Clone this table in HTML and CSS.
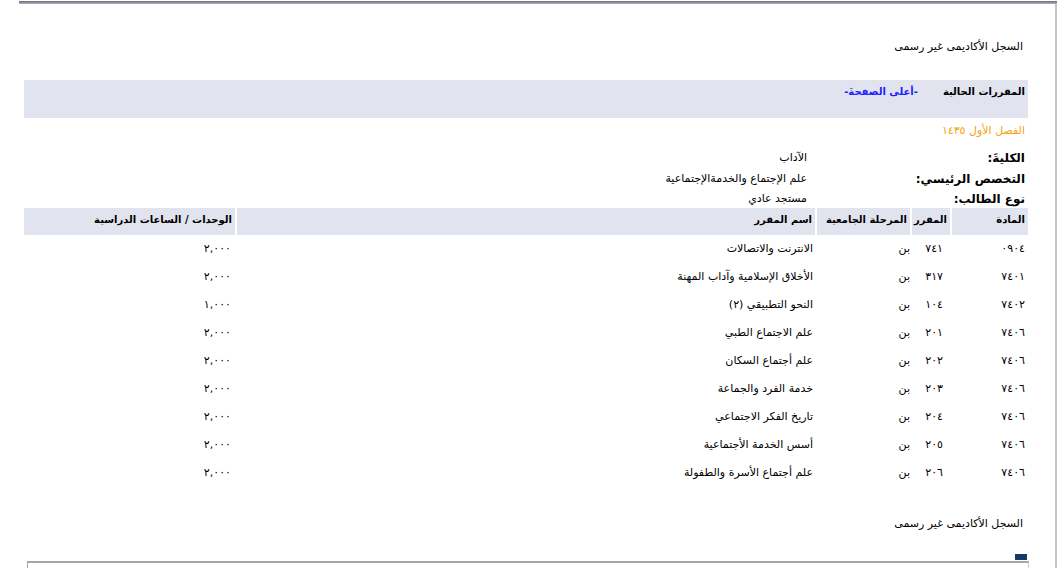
FILE: index.html
```html
<!DOCTYPE html>
<html lang="ar">
<head>
<meta charset="utf-8">
<title>السجل الأكاديمى غير رسمى</title>
<link rel="stylesheet" href="styles.css">
</head>
<body>
<div class="frame">
  <div class="topbar"></div>
  <div class="page" dir="rtl">
    <div class="title">السجل الأكاديمى غير رسمى</div>
    <div class="band">
      <span class="band-h">المقررات الحالية</span>
      <a class="top-link" href="#">-أعلى الصفحةَ-</a>
    </div>
    <div class="term">الفصل الأول ١٤٣٥</div>
    <div class="info">
      <div class="lbl">الكليةَ:</div><div class="val">الآداب</div>
      <div class="lbl">التخصص الرئيسي:</div><div class="val">علم الإجتماع والخدمةالإجتماعية</div>
      <div class="lbl">نوع الطالب:</div><div class="val">مستجد عادي</div>
    </div>
    <table class="courses">
      <thead>
        <tr>
          <th class="c1">المادة</th>
          <th class="c2">المقرر</th>
          <th class="c3">المرحلة الجامعية</th>
          <th class="c4">اسم المقرر</th>
          <th class="c5">الوحدات / الساعات الدراسية</th>
        </tr>
      </thead>
      <tbody>
        <tr><td class="c1">٠٩٠٤</td><td class="c2">٧٤١</td><td class="c3">بن</td><td class="c4">الانترنت والاتصالات</td><td class="c5">٢,٠٠٠</td></tr>
        <tr><td class="c1">٧٤٠١</td><td class="c2">٣١٧</td><td class="c3">بن</td><td class="c4">الأخلاق الإسلامية وآداب المهنة</td><td class="c5">٢,٠٠٠</td></tr>
        <tr><td class="c1">٧٤٠٢</td><td class="c2">١٠٤</td><td class="c3">بن</td><td class="c4">النحو التطبيقي (٢)</td><td class="c5">١,٠٠٠</td></tr>
        <tr><td class="c1">٧٤٠٦</td><td class="c2">٢٠١</td><td class="c3">بن</td><td class="c4">علم الاجتماع الطبي</td><td class="c5">٢,٠٠٠</td></tr>
        <tr><td class="c1">٧٤٠٦</td><td class="c2">٢٠٢</td><td class="c3">بن</td><td class="c4">علم أجتماع السكان</td><td class="c5">٢,٠٠٠</td></tr>
        <tr><td class="c1">٧٤٠٦</td><td class="c2">٢٠٣</td><td class="c3">بن</td><td class="c4">خدمة الفرد والجماعة</td><td class="c5">٢,٠٠٠</td></tr>
        <tr><td class="c1">٧٤٠٦</td><td class="c2">٢٠٤</td><td class="c3">بن</td><td class="c4">تاريخ الفكر الاجتماعي</td><td class="c5">٢,٠٠٠</td></tr>
        <tr><td class="c1">٧٤٠٦</td><td class="c2">٢٠٥</td><td class="c3">بن</td><td class="c4">أسس الخدمة الأجتماعية</td><td class="c5">٢,٠٠٠</td></tr>
        <tr><td class="c1">٧٤٠٦</td><td class="c2">٢٠٦</td><td class="c3">بن</td><td class="c4">علم أجتماع الأسرة والطفولة</td><td class="c5">٢,٠٠٠</td></tr>
      </tbody>
    </table>
    <div class="title bottom">السجل الأكاديمى غير رسمى</div>
    <div class="foot">
      <span class="sq"></span>
      <div class="box"></div>
    </div>
  </div>
</div>
</body>
</html>
```
FILE: styles.css
```css
html, body {
  margin: 0;
  padding: 0;
  background: #ffffff;
  overflow: hidden;
}
body {
  font-family: Tahoma, "DejaVu Sans", sans-serif;
  font-size: 11px;
  color: #000000;
}
.frame {
  margin: 1px 0 0 19px;
  width: 1036px;
  height: 567px;
  border-right: 2px solid #c4c4c4;
}
.topbar {
  height: 3px;
  margin-right: -2px;
  background: linear-gradient(#6a6a76, #8e8e98 50%, #b4b4bc);
}
.page {
  margin: 0 27px 0 5px;
  width: 1004px;
}
.title {
  margin-top: 36px;
  padding-right: 5px;
  line-height: 14px;
  height: 14px;
}
.band {
  margin-top: 26px;
  height: 38px;
  box-sizing: border-box;
  padding: 5px 3px 0 0;
  background: #e1e4ee;
  display: flex;
  align-items: flex-start;
  gap: 25px;
  line-height: 14px;
}
.band-h {
  font-weight: bold;
  font-size: 10px;
}
.top-link {
  color: #1f1fff;
  font-weight: bold;
  font-size: 10px;
  text-decoration: none;
}
.term {
  margin-top: 6px;
  padding-right: 3px;
  color: #f5a20f;
  line-height: 14px;
}
.info {
  margin-top: 9px;
  display: grid;
  grid-template-columns: 221px 1fr;
  grid-template-rows: 21px 21px 19px;
  align-items: center;
}
.lbl {
  font-weight: bold;
  font-size: 12px;
  padding-right: 3px;
}
.courses {
  width: calc(100% + 4px);
  margin: 0 -2px;
  border-collapse: separate;
  border-spacing: 2px 0;
  table-layout: fixed;
}
.courses th {
  background: #e1e4ee;
  font-weight: bold;
  font-size: 10px;
  text-align: right;
  white-space: nowrap;
  height: 27px;
  box-sizing: border-box;
  padding: 0 3px 3px 3px;
  line-height: 14px;
  vertical-align: middle;
}
.courses td {
  text-align: right;
  white-space: nowrap;
  height: 28px;
  box-sizing: border-box;
  padding: 7px 3px 7px 3px;
  line-height: 14px;
  vertical-align: top;
}
.courses .c1 { width: 76px; }
.courses .c2 { width: 38px; }
.courses .c3 { width: 93px; }
.courses .c4 { width: auto; }
.courses .c5 { width: 211px; }
.courses td.c2 { padding-right: 7px; }
.courses td.c3 { padding-right: 0; }
.courses td.c4 { padding-right: 2px; }
.courses td.c5 { padding-right: 4px; }
.title.bottom {
  margin-top: 30px;
}
.foot {
  margin-top: 23px;
}
.sq {
  display: block;
  width: 12px;
  height: 6px;
  margin-right: 1px;
  background: #163a66;
}
.box {
  margin: 1px -1px 0 3px;
  height: 20px;
  border-top: 2px solid #a6a6a6;
  border-left: 1px solid #a6a6a6;
  border-right: 1px solid #d0d0d0;
}
```
